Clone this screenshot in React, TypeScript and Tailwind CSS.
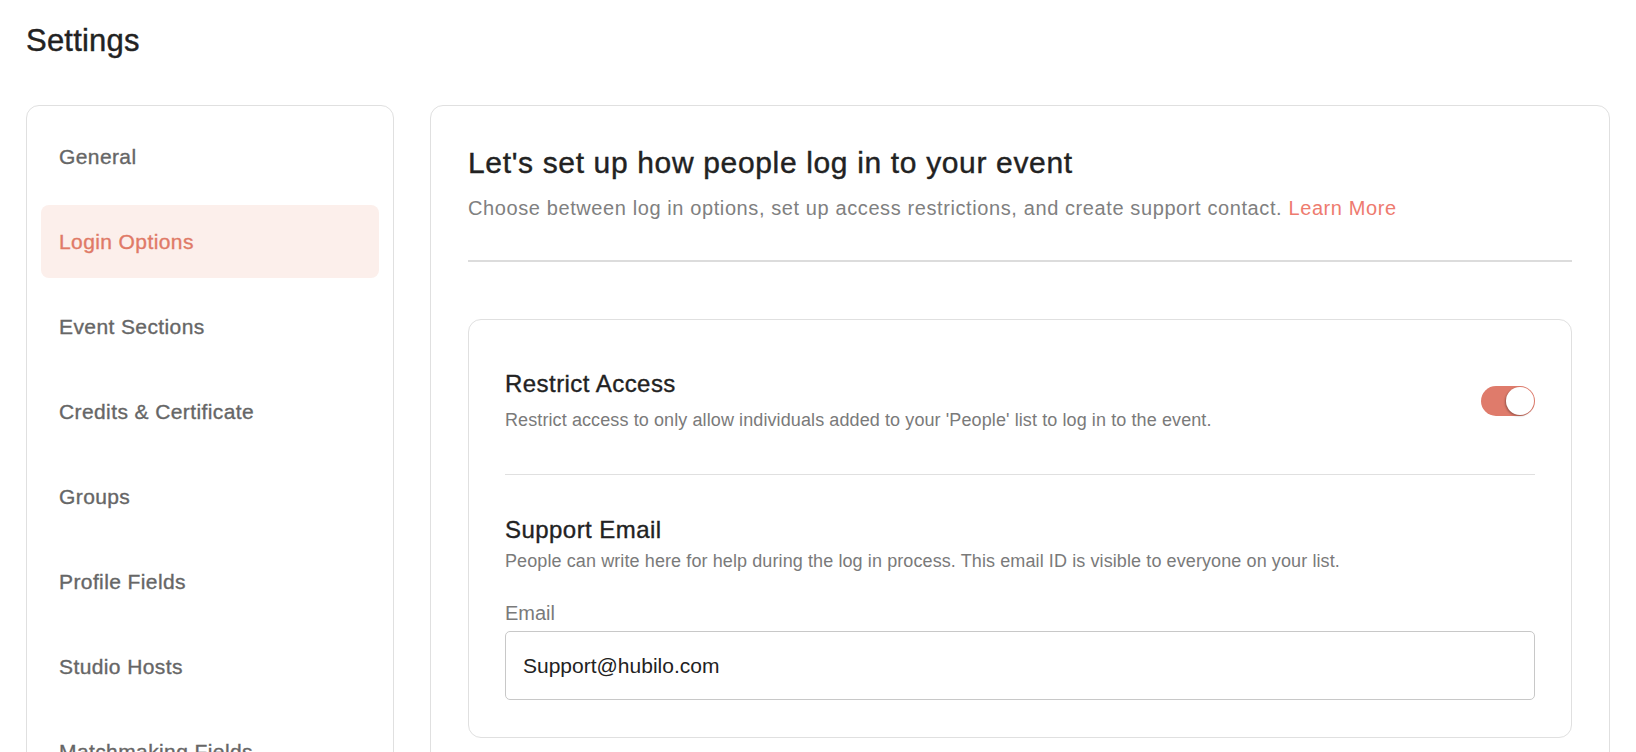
import { useState } from "react";

const navItems = [
  "General",
  "Login Options",
  "Event Sections",
  "Credits & Certificate",
  "Groups",
  "Profile Fields",
  "Studio Hosts",
  "Matchmaking Fields",
];

function Toggle({ on, onChange }: { on: boolean; onChange: (v: boolean) => void }) {
  return (
    <button
      type="button"
      onClick={() => onChange(!on)}
      className={`flex h-[30px] w-[54px] shrink-0 items-center rounded-full p-px ${
        on ? "justify-end bg-[#df7b6b]" : "justify-start bg-[#d6d6d6]"
      }`}
    >
      <span className="h-[28px] w-[28px] rounded-full bg-white shadow-[-1px_1px_2px_rgba(0,0,0,0.3)]" />
    </button>
  );
}

export default function App() {
  const [active, setActive] = useState("Login Options");
  const [restricted, setRestricted] = useState(true);
  const [email, setEmail] = useState("Support@hubilo.com");

  return (
    <div className="h-[752px] overflow-hidden bg-white px-[26px] font-['Liberation_Sans',Arial,sans-serif]">
      <h1 className="pt-[22px] text-[31px] leading-[38px] font-medium tracking-[0.2px] text-[#222] [-webkit-text-stroke:0.4px_currentColor]">
        Settings
      </h1>

      <div className="mt-[45px] flex items-start gap-[36px]">
        {/* sidebar */}
        <nav className="flex w-[368px] shrink-0 flex-col gap-[12px] rounded-[13px] border border-[#e0e0e0] p-[14px]">
          {navItems.map((item) => (
            <button
              key={item}
              type="button"
              onClick={() => setActive(item)}
              className={`flex h-[73px] items-center rounded-[8px] pl-[18px] text-left text-[21px] font-medium tracking-[0.4px] [-webkit-text-stroke:0.35px_currentColor] ${
                active === item ? "bg-[#fcefeb] text-[#e07a67]" : "text-[#666]"
              }`}
            >
              {item}
            </button>
          ))}
        </nav>

        {/* content */}
        <main className="min-w-0 flex-1 rounded-[13px] border border-[#e0e0e0] px-[37px] pt-[39px] pb-[40px]">
          <h2 className="text-[30px] leading-[36px] font-medium tracking-[0.65px] text-[#222] [-webkit-text-stroke:0.4px_currentColor]">
            Let's set up how people log in to your event
          </h2>
          <p className="mt-[13px] text-[20px] leading-[28px] tracking-[0.6px] text-[#808080]">
            Choose between log in options, set up access restrictions, and create support contact.{" "}
            <a href="#" className="text-[#ee7b6f]">
              Learn More
            </a>
          </p>
          <div className="mt-[38px] h-[2px] bg-[#dcdcdc]" />

          <section className="mt-[57px] rounded-[13px] border border-[#e0e0e0] px-[36px] pt-[49px] pb-[37px]">
            <div className="flex items-center justify-between">
              <div>
                <h3 className="text-[24px] leading-[30px] font-medium tracking-[0.45px] text-[#222] [-webkit-text-stroke:0.35px_currentColor]">
                  Restrict Access
                </h3>
                <p className="mt-[9px] text-[18px] leading-[24px] tracking-[0.1px] text-[#7a7a7a]">
                  Restrict access to only allow individuals added to your 'People' list to log in to the event.
                </p>
              </div>
              <Toggle on={restricted} onChange={setRestricted} />
            </div>

            <div className="mt-[42px] h-px bg-[#e0e0e0]" />

            <h3 className="mt-[40px] text-[24px] leading-[30px] font-medium tracking-[0.45px] text-[#222] [-webkit-text-stroke:0.35px_currentColor]">
              Support Email
            </h3>
            <p className="mt-[4px] text-[18px] leading-[24px] tracking-[0.1px] text-[#7a7a7a]">
              People can write here for help during the log in process. This email ID is visible to everyone on your list.
            </p>

            <label className="mt-[28px] block text-[20px] leading-[24px] text-[#7a7a7a]">Email</label>
            <input
              value={email}
              onChange={(e) => setEmail(e.target.value)}
              className="mt-[6px] h-[69px] w-full rounded-[5px] border border-[#c8c8c8] px-[17px] text-[21px] text-[#222] outline-none"
            />
          </section>
        </main>
      </div>
    </div>
  );
}
